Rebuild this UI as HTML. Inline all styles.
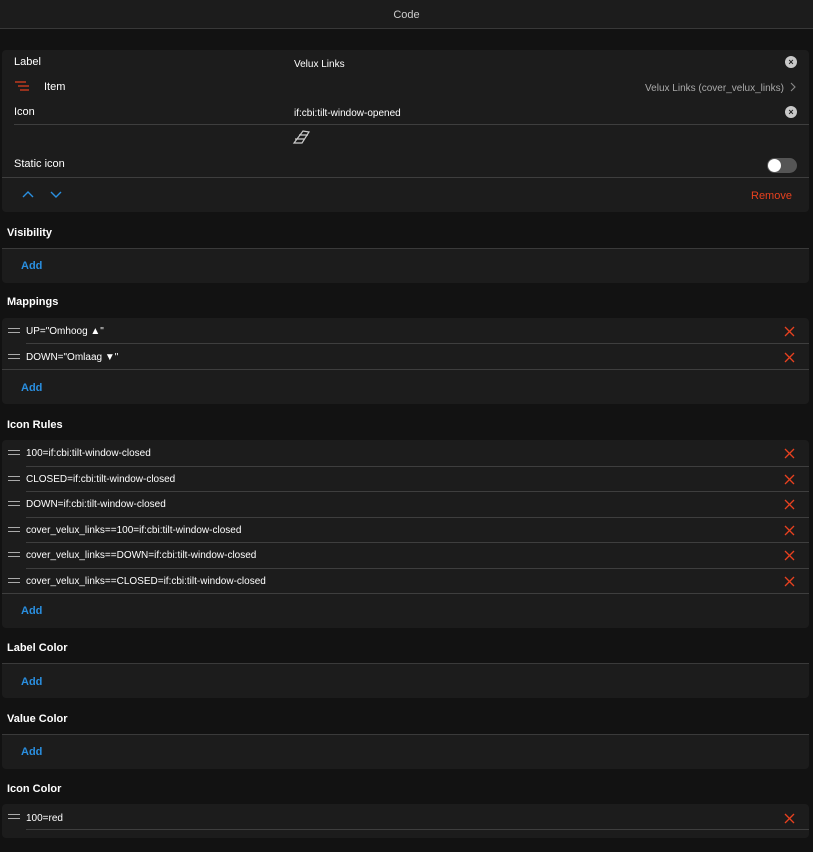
<!DOCTYPE html>
<html><head><meta charset="utf-8"><style>
*{margin:0;padding:0;box-sizing:border-box}
body{width:813px;height:852px;background:#121212;font-family:"Liberation Sans",sans-serif;color:#fff;position:relative;overflow:hidden;font-size:11px}
.a{position:absolute;white-space:nowrap}
.tx{margin-top:1px}
.card{position:absolute;left:2px;width:807px;background:#1c1c1c;border-radius:4px}
.bt{border-top:1px solid #3a3a3a;border-radius:0 0 4px 4px}
.line{position:absolute;height:1px;background:#3e3e3e}
.t{font-weight:bold;font-size:11px;left:7px;margin-top:1px}
.add{color:#2a8fe0;font-weight:bold;left:21px;margin-top:1px}
.x{position:absolute;left:784px;width:11px;height:11px}
.h{position:absolute;left:8px;width:12px;height:5px;border-top:1px solid #aaa;border-bottom:1px solid #aaa}
.clr{position:absolute;left:785px;width:12px;height:12px;border-radius:50%;background:#c8c8c8;color:#1c1c1c;font-size:9px;font-weight:bold;text-align:center;line-height:12px}
</style></head><body>
<svg width="0" height="0" style="position:absolute"><defs><symbol id="x" viewBox="0 0 11 11"><path d="M1 1 L10 10 M10 1 L1 10" stroke="#e8411f" stroke-width="1.3"/></symbol></defs></svg>
<div class="a" style="left:0;top:0;width:813px;height:29px;background:#1c1c1c;border-bottom:1px solid #383838;text-align:center;line-height:31px;color:#ccc;font-size:11px">Code</div>

<div class="card" style="top:50px;height:162px"></div>
<div class="a tx" style="left:14px;top:55px">Label</div>
<div class="a tx" style="left:294px;top:58px;font-size:10px">Velux Links</div>
<div class="clr" style="top:56px">×</div>
<svg class="a" style="left:15px;top:81px" width="16" height="10"><g stroke="#e8411f" stroke-width="1.2"><line x1="0" y1="1" x2="11" y2="1"/><line x1="3" y1="5" x2="14" y2="5"/><line x1="5" y1="9" x2="14" y2="9"/></g></svg>
<div class="a tx" style="left:44px;top:80px">Item</div>
<div class="a tx" style="right:29px;top:82px;font-size:10px;color:#aaa">Velux Links (cover_velux_links)</div>
<svg class="a" style="left:790px;top:82px" width="6" height="10"><path d="M1 1 L5 5 L1 9" stroke="#888" fill="none" stroke-width="1.1"/></svg>
<div class="a tx" style="left:14px;top:105px">Icon</div>
<div class="a tx" style="left:294px;top:107px;font-size:10px">if:cbi:tilt-window-opened</div>
<div class="clr" style="top:106px">×</div>
<div class="line" style="left:14px;top:124px;width:795px"></div>
<svg class="a" style="left:292px;top:129px" width="20" height="16"><path d="M2 14 L10 14 L17 3 L11 2 Z M3 10 L12 10 M7 6 L16 6" stroke="#ccc" stroke-width="1.2" fill="none"/></svg>
<div class="a tx" style="left:14px;top:157px">Static icon</div>
<div class="a" style="left:767px;top:158px;width:30px;height:15px;border-radius:8px;background:#555"></div>
<div class="a" style="left:768px;top:159px;width:13px;height:13px;border-radius:50%;background:#fff"></div>
<div class="line" style="left:2px;top:177px;width:807px"></div>
<svg class="a" style="left:22px;top:190px" width="44" height="8"><path d="M1 7 L6 2 L11 7 M29 2 L34 7 L39 2" stroke="#2a8fe0" stroke-width="1.4" fill="none"/></svg>
<div class="a tx" style="left:751px;top:189px;color:#e8411f">Remove</div>

<div class="a t" style="top:226px">Visibility</div>
<div class="card bt" style="top:248px;height:35px"></div>
<div class="a add" style="top:259px">Add</div>

<div class="a t" style="top:295px">Mappings</div>
<div class="card" style="top:318px;height:86px"></div>
<div class="h" style="top:328px"></div><div class="a tx" style="left:26px;top:325px;font-size:10px">UP="Omhoog ▲"</div><svg class="x" style="top:326px"><use href="#x"/></svg>
<div class="line" style="left:26px;top:343px;width:783px"></div>
<div class="h" style="top:354px"></div><div class="a tx" style="left:26px;top:351px;font-size:10px">DOWN="Omlaag ▼"</div><svg class="x" style="top:352px"><use href="#x"/></svg>
<div class="line" style="left:2px;top:369px;width:807px"></div>
<div class="a add" style="top:381px">Add</div>

<div class="a t" style="top:418px">Icon Rules</div>
<div class="card" style="top:440px;height:188px"></div>
<div class="h" style="top:450px"></div><div class="a tx" style="left:26px;top:447px;font-size:10px">100=if:cbi:tilt-window-closed</div><svg class="x" style="top:448px"><use href="#x"/></svg>
<div class="line" style="left:26px;top:466px;width:783px"></div>
<div class="h" style="top:476px"></div><div class="a tx" style="left:26px;top:473px;font-size:10px">CLOSED=if:cbi:tilt-window-closed</div><svg class="x" style="top:474px"><use href="#x"/></svg>
<div class="line" style="left:26px;top:491px;width:783px"></div>
<div class="h" style="top:501px"></div><div class="a tx" style="left:26px;top:498px;font-size:10px">DOWN=if:cbi:tilt-window-closed</div><svg class="x" style="top:499px"><use href="#x"/></svg>
<div class="line" style="left:26px;top:517px;width:783px"></div>
<div class="h" style="top:527px"></div><div class="a tx" style="left:26px;top:524px;font-size:10px">cover_velux_links==100=if:cbi:tilt-window-closed</div><svg class="x" style="top:525px"><use href="#x"/></svg>
<div class="line" style="left:26px;top:542px;width:783px"></div>
<div class="h" style="top:552px"></div><div class="a tx" style="left:26px;top:549px;font-size:10px">cover_velux_links==DOWN=if:cbi:tilt-window-closed</div><svg class="x" style="top:550px"><use href="#x"/></svg>
<div class="line" style="left:26px;top:568px;width:783px"></div>
<div class="h" style="top:578px"></div><div class="a tx" style="left:26px;top:575px;font-size:10px">cover_velux_links==CLOSED=if:cbi:tilt-window-closed</div><svg class="x" style="top:576px"><use href="#x"/></svg>
<div class="line" style="left:2px;top:593px;width:807px"></div>
<div class="a add" style="top:604px">Add</div>

<div class="a t" style="top:641px">Label Color</div>
<div class="card bt" style="top:663px;height:35px"></div>
<div class="a add" style="top:675px">Add</div>

<div class="a t" style="top:712px">Value Color</div>
<div class="card bt" style="top:734px;height:35px"></div>
<div class="a add" style="top:745px">Add</div>

<div class="a t" style="top:782px">Icon Color</div>
<div class="card" style="top:804px;height:34px"></div>
<div class="h" style="top:814px"></div><div class="a tx" style="left:26px;top:812px;font-size:10px">100=red</div><svg class="x" style="top:813px"><use href="#x"/></svg>
<div class="line" style="left:26px;top:829px;width:783px"></div>
</body></html>
